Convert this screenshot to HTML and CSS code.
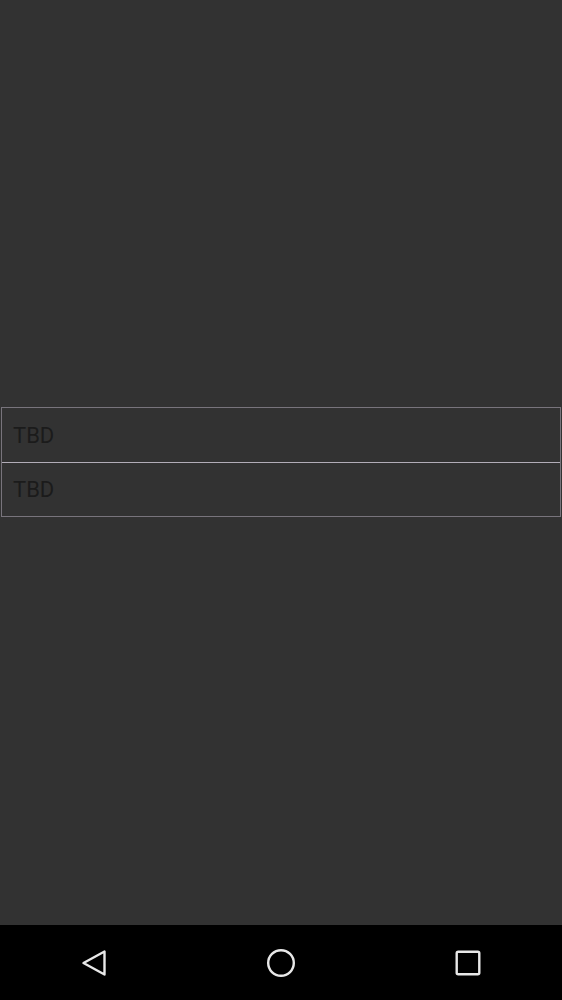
FILE: index.html
```html
<!DOCTYPE html>
<html lang="en">
<head>
    <meta charset="UTF-8">
    <meta name="viewport" content="width=device-width, initial-scale=1.0">
    <title>TBD</title>
    <link rel="stylesheet" href="styles.css">
</head>
<body>
    <div class="screen">
        <div class="content">
            <ul class="list">
                <li class="list-item">TBD</li>
                <li class="list-item">TBD</li>
            </ul>
        </div>

        <div class="nav-bar">
            <button class="nav-button" aria-label="Back">
                <svg width="32" height="32" viewBox="0 0 32 32">
                    <path d="M26.5 4.5 L26.5 27.5 L5.5 16 Z" fill="none" stroke="#e8e8e8" stroke-width="2.4" stroke-linejoin="round"/>
                </svg>
            </button>
            <button class="nav-button" aria-label="Home">
                <svg width="32" height="32" viewBox="0 0 32 32">
                    <circle cx="16" cy="16" r="12.8" fill="none" stroke="#e8e8e8" stroke-width="2.4"/>
                </svg>
            </button>
            <button class="nav-button" aria-label="Recents">
                <svg width="32" height="32" viewBox="0 0 32 32">
                    <rect x="4.7" y="4.7" width="22.6" height="22.6" rx="1.5" fill="none" stroke="#e8e8e8" stroke-width="2.4"/>
                </svg>
            </button>
        </div>
    </div>
</body>
</html>
```

FILE: styles.css
```css
* {
    box-sizing: border-box;
    margin: 0;
    padding: 0;
}

body {
    background: #000;
    font-family: Roboto, "Noto Sans", sans-serif;
}

.screen {
    display: flex;
    flex-direction: column;
    height: 1000px;
}

.content {
    flex: 1;
    background: #323232;
    display: flex;
    flex-direction: column;
    justify-content: center;
    padding: 0 1px 1px;
}

.list {
    list-style: none;
    border: 1px solid #78747c;
}

.list-item {
    height: 54px;
    display: flex;
    align-items: center;
    padding-left: 11px;
    font-size: 22px;
    color: #1b1b1b;
}

.list-item + .list-item {
    border-top: 1px solid #b2adb8;
}

.nav-bar {
    height: 75px;
    background: #000;
    display: flex;
    justify-content: space-between;
    align-items: center;
    padding: 0 78px;
}

.nav-button {
    width: 32px;
    height: 32px;
    background: none;
    border: none;
    display: flex;
    align-items: center;
    justify-content: center;
}
```
